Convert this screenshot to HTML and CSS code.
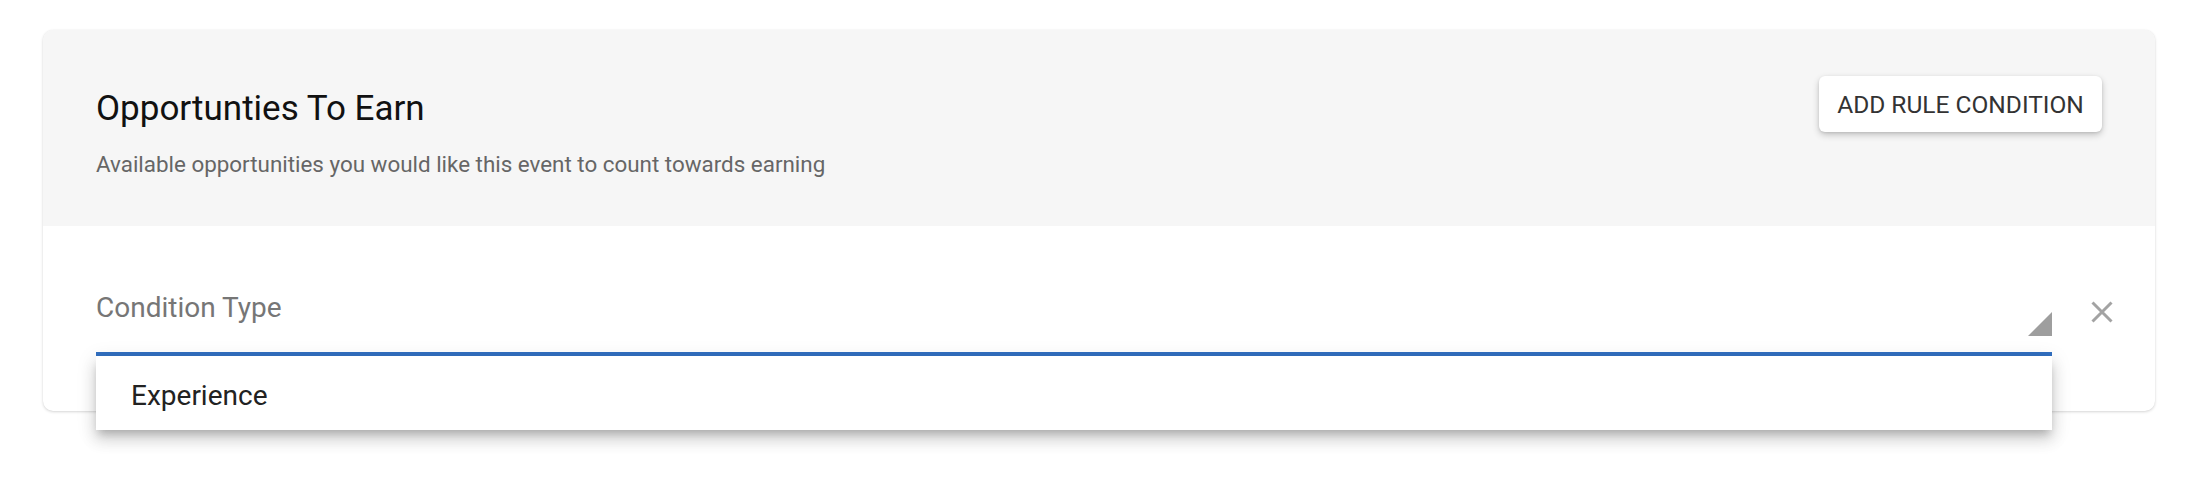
FILE: index.html
```html
<!DOCTYPE html>
<html lang="en">
<head>
    <meta charset="UTF-8">
    <meta name="viewport" content="width=device-width, initial-scale=1.0">
    <title>Opportunties To Earn</title>
    <link rel="stylesheet" href="styles.css">
</head>
<body>
    <div class="page">
        <div class="card">
            <!-- Header -->
            <div class="card-header">
                <div class="heading">
                    <h2>Opportunties To Earn</h2>
                    <p class="subtitle">Available opportunities you would like this event to count towards earning</p>
                </div>
                <button class="raised">ADD RULE CONDITION</button>
            </div>

            <!-- Rule conditions -->
            <div class="card-body">
                <div class="condition-row">
                    <div class="field">
                        <span class="field-label">Condition Type</span>
                        <svg class="select-arrow" width="24" height="24" viewBox="0 0 24 24">
                            <polygon points="24,0 24,24 0,24" fill="#9e9e9e"></polygon>
                        </svg>
                        <ul class="menu">
                            <li>Experience</li>
                        </ul>
                    </div>
                    <svg class="remove" width="22" height="22" viewBox="0 0 22 22">
                        <path d="M1.5 1.5 L20.5 20.5 M20.5 1.5 L1.5 20.5" stroke="#a3a3a3" stroke-width="3" fill="none"></path>
                    </svg>
                </div>
            </div>
        </div>
    </div>
</body>
</html>
```

FILE: styles.css
```css
body {
    font-family: Roboto, "Liberation Sans", Arial, sans-serif;
    background-color: #fff;
    margin: 0;
}

.page {
    padding: 30px 39px 100px 43px;
}

.card {
    background: white;
    border-radius: 10px;
    box-shadow: 0px 1px 3px rgba(0, 0, 0, 0.16), 0px 0px 1px rgba(0, 0, 0, 0.08);
}

.card-header {
    display: flex;
    justify-content: space-between;
    align-items: flex-start;
    background-color: #f6f6f6;
    border-radius: 10px 10px 0 0;
    padding: 58px 53px 47px 53px;
}

h2 {
    margin: 0;
    font-size: 35px;
    font-weight: 400;
    line-height: 41px;
    color: #111;
}

.subtitle {
    margin: 20px 0 0 0;
    font-size: 22.4px;
    line-height: 30px;
    color: #666;
}

button.raised {
    margin-top: -12px;
    width: 283px;
    height: 56px;
    padding: 0;
    background-color: white;
    color: #333;
    font-family: inherit;
    font-size: 24.5px;
    border: none;
    border-radius: 6px;
    box-shadow: 0px 3px 7px rgba(0, 0, 0, 0.2), 0px 1px 3px rgba(0, 0, 0, 0.1);
    cursor: pointer;
}

.card-body {
    padding: 65px 42px 55px 53px;
}

.condition-row {
    display: flex;
    align-items: flex-start;
}

.field {
    position: relative;
    flex: 1;
    height: 61px;
    display: flex;
    justify-content: space-between;
    border-bottom: 4px solid #3270c1;
}

.field-label {
    font-size: 28px;
    line-height: 33px;
    color: #767676;
}

.select-arrow {
    align-self: flex-end;
    margin-bottom: 16px;
}

.remove {
    margin: 10px 0 0 39px;
}

.menu {
    position: absolute;
    top: 100%;
    left: 0;
    right: 0;
    margin: 4px 0 0 0;
    padding: 0;
    list-style: none;
    background: white;
    box-shadow: 0px 6px 8px -3px rgba(0, 0, 0, 0.2), 0px 10px 14px 1px rgba(0, 0, 0, 0.12), 0px 4px 18px 3px rgba(0, 0, 0, 0.08);
}

.menu li {
    padding: 23px 35px 18px 35px;
    font-size: 28px;
    line-height: 33px;
    color: #222;
}
```
